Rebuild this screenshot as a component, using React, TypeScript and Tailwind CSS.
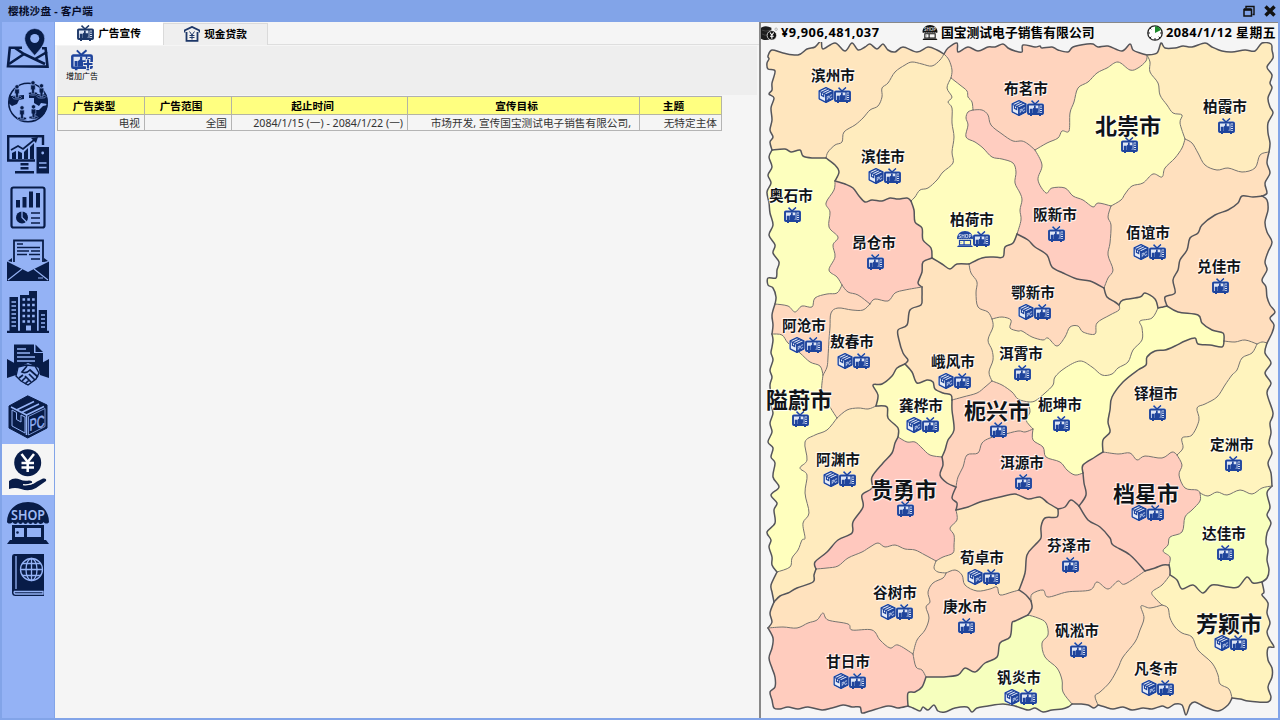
import React from "react";

type Pt = [number, number];

/* Borders between regions. A leading "!" marks a province or coast line. */
const EDGES: Record<string, string> = {
  AB: "!772,150 770,142 773,137 770,130 772,120 771,108 774,98 769,94 772,90 772,83 775,71 768,69 767,63 769,59 768,56 772,50 783,53 798,55 807,49 815,47 821,41 823,49 835,43 845,51 852,43 858,50 865,47 870,44 877,49 883,44 888,50 895,52 903,47 917,52 928,47 937,50 944,54",
  BC: "!944,54 948,48 957,43 958,52 968,47 978,51 988,47 995,47 1003,44 1008,48 1015,51 1022,52 1023,45 1035,47 1040,46 1042,48 1052,47 1058,50 1068,52 1073,47 1087,44 1093,44 1098,47 1108,46 1122,51 1130,44 1133,50 1140,53 1147,55",
  CD: "!1147,55 1157,53 1161,43 1165,48 1175,48 1183,46 1192,47 1205,43 1212,47 1222,51 1232,52 1245,50 1255,51 1262,43 1271,44 1272,50 1273,58 1267,67 1272,75 1270,83 1272,88 1268,98 1270,107 1273,113 1268,123 1268,133 1270,143 1269,152",
  DE: "!1269,152 1267,163 1270,173 1265,183 1267,193 1262,196",
  EF: "!1262,196 1267,200 1268,210 1265,222 1267,232 1272,242 1268,252 1265,262 1267,270 1262,280 1266,287 1267,297 1270,305 1275,312 1270,318 1274,325 1272,333 1267,343",
  FG: "!1267,343 1265,353 1271,363 1265,373 1271,383 1267,393 1273,413 1270,423 1271,433 1269,443 1272,453 1268,463 1271,473 1272,486",
  GH: "!1272,486 1267,493 1270,507 1267,515 1271,523 1267,533 1266,543 1268,550 1267,560 1269,570 1267,578 1262,582",
  HI: "!1262,582 1264,592 1262,595 1268,603 1267,613 1270,623 1267,632 1270,640 1274,647 1268,648 1268,660 1272,668 1272,677 1268,687 1271,697 1268,702 1258,702 1248,701 1240,699 1232,698",
  IJ: "!1232,698 1228,705 1218,711 1205,707 1195,702 1190,705 1186,715 1182,705 1175,704 1168,708 1162,706 1152,709 1143,708 1132,710 1123,707 1113,709 1105,707 1098,705",
  JK: "!1098,705 1094,708 1088,705 1080,704 1072,704",
  KL: "!1072,704 1068,707 1062,709 1052,710 1043,712 1035,708 1028,710 1015,706 1003,704 988,706 977,708 972,712 967,707 955,708 945,712 938,711 934,705 928,710 923,707 920,711 913,708 908,706",
  LM: "!908,706 898,708 888,706 870,711 862,713 860,707 852,707 843,705 832,708 822,710 808,707 798,709 788,707 780,709 774,708 772,700 770,692 775,687 775,677 772,668 769,658 772,648 773,638 768,628",
  MN: "!768,628 772,622 770,613 774,602",
  NO: "!774,602 772,592 771,585 777,572",
  OP: "!777,572 772,565 772,557 769,547 771,540 767,532 775,523 774,510 777,503 771,495 779,487 773,477 775,463 771,457 773,448 768,442 772,432 770,423 773,413 770,403 771,397 770,385 772,377 770,370 773,360 771,353 772,347 773,340 772,334",
  PQ: "!772,334 773,325 772,315 775,304",
  QA: "!775,304 776,297 773,288 768,285 768,278 776,278 777,270 779,262 773,253 775,245 769,235 773,225 770,213 769,203 767,192 771,183 768,175 772,167 769,157 772,150",
  e1: "!772,150 785,149 791,152 800,150 803,156 812,158 826,158",
  e2: "826,158 828,152 835,145 842,142 844,132 855,125 863,118 870,110 878,106 882,97 882,88 888,83 895,72 905,65 912,62 922,64 932,66 940,60 944,54",
  e3: "!826,158 835,165 839,172 835,181",
  e4: "!835,181 845,184 853,188 859,196 865,202 872,200 882,201 890,198 898,199 907,198 911,201",
  e5: "911,201 915,197 920,190 928,188 937,180 943,172 953,163 952,152 954,137 952,123 952,108 948,102 952,97 947,88 951,78",
  e6: "944,54 949,60 952,70 951,78",
  e7: "951,78 960,85 967,91 968,97 972,102 973,110",
  e8: "973,110 968,112 966,118 968,125 966,137 975,142 983,148 992,157 1002,159 1013,163 1016,172 1015,183 1020,193 1022,200 1020,210 1021,220 1017,234",
  e9: "973,110 982,110 988,115 991,125 1002,134 1013,141 1022,141 1028,144 1035,150",
  e10: "1035,150 1047,143 1058,138 1062,131 1069,131 1070,113 1074,102 1078,88 1088,82 1097,73 1107,68 1118,62 1130,70 1138,68 1146,61 1147,55",
  e11: "1147,55 1150,62 1150,72 1158,83 1160,95 1167,105 1173,113 1182,115 1180,123 1185,139",
  e12: "1185,139 1192,143 1198,153 1205,165 1217,170 1228,168 1242,172 1255,168 1260,155 1269,152",
  e13: "1035,150 1042,165 1038,180 1046,193 1052,188 1065,188 1073,196 1083,200 1093,207 1098,203 1111,206",
  e14: "1111,206 1121,200 1125,194 1132,186 1143,183 1153,174 1162,177 1165,168 1175,158 1182,148 1185,139",
  e15: "1111,206 1108,217 1111,225 1110,243 1108,255 1113,270 1108,278 1104,288",
  e16: "!1017,234 1028,240 1035,247 1047,255 1052,267 1063,273 1077,279 1090,281 1104,288",
  e17: "!1104,288 1107,297 1115,302 1119,305",
  e18: "!1119,305 1123,300 1140,297 1145,293 1155,299 1158,308",
  e19: "!1158,308 1163,307 1167,306",
  e20: "!1167,306 1165,297 1175,293 1173,280 1178,270 1180,260 1187,250 1190,238 1198,233 1202,225 1215,215 1228,210 1238,203 1242,196 1253,197 1262,196",
  e21: "1158,308 1152,318 1140,321 1142,328 1142,340 1133,350 1128,362 1118,368 1112,374 1102,375 1092,367 1080,361 1065,368 1055,377 1053,385 1045,393 1035,401 1028,402",
  e22: "!1167,306 1178,312 1198,315 1202,323 1212,330 1223,333 1224,341",
  e23: "1224,341 1235,342 1245,340 1257,344",
  e24: "1257,344 1262,342 1267,343",
  e25: "!1224,341 1222,347 1210,345 1198,344 1195,338 1185,341 1175,346 1165,350 1155,351 1147,357 1146,365 1138,370 1123,382 1112,397 1110,410 1108,422 1110,432 1103,440 1103,452",
  e26: "1257,344 1252,353 1242,358 1237,370 1232,375 1225,385 1217,397 1205,404 1197,408 1199,420 1192,435 1182,438 1183,448 1177,455",
  e27: "1103,452 1118,454 1130,453 1137,460 1145,456 1162,458 1172,452 1177,455",
  e28: "1177,455 1182,465 1179,475 1185,488 1197,490 1200,493",
  e29: "1200,493 1208,496 1217,492 1227,495 1240,490 1252,494 1262,488 1272,486",
  e30: "1200,493 1200,501 1192,510 1185,517 1182,532 1170,537 1168,545 1163,551 1170,557 1169,565",
  e31: "!1145,571 1155,568 1163,565 1169,565",
  e32: "!1169,565 1170,570 1170,575",
  e33: "!1170,575 1177,580 1182,589 1193,585 1203,593 1212,585 1228,587 1238,587 1247,577 1253,583 1262,582",
  e34: "1170,575 1162,585 1152,592 1155,598 1162,605",
  e35: "1162,605 1168,608 1170,618 1175,627 1182,633 1192,637 1198,650 1212,663 1218,675 1220,684 1229,689 1232,698",
  e36: "1162,605 1150,608 1141,606 1144,618 1140,630 1135,642 1123,657 1118,668 1110,682 1100,692 1095,696 1098,705",
  e37: "!1019,590 1026,595 1031,601",
  e38: "1031,601 1032,594 1043,590 1048,597 1067,592 1090,590 1097,582 1108,589 1118,581 1125,584 1145,571",
  e39: "!1031,601 1032,608 1028,615",
  e40: "1028,615 1038,618 1046,623 1048,635 1042,643 1045,657 1057,668 1062,680 1063,692 1072,704",
  e41: "!1028,615 1015,621 1012,623 1010,637 1000,643 997,657 985,663 975,672 965,668 958,675 942,677 926,677",
  e42: "!926,677 922,687 915,692 908,693 908,706",
  e43: "913,654 916,667 922,670 926,677",
  e44: "768,628 783,627 797,628 808,623 817,620 823,613 828,620 848,624 852,630 872,630 880,640 890,648 898,645 913,654",
  e45: "946,573 943,578 933,583 928,592 930,602 926,607 929,618 925,630 917,640 913,654",
  e46: "936,561 934,568 938,572 946,573",
  e47: "946,573 955,570 962,575 965,585 977,591 990,589 997,587 1000,595 1012,592 1019,590",
  e48: "816,569 827,568 838,566 848,558 862,552 870,547 878,543 885,547 895,545 905,549 915,550 925,555 936,561",
  e49: "!774,602 780,596 788,593 797,588 813,582 814,575 816,569",
  e50: "!816,569 815,562 827,552 838,540 852,533 853,522 863,507 862,495 872,488 872,477 883,463 892,453 895,443 898,437",
  e51: "777,572 790,567 792,558 798,550 802,540 805,538 803,523 809,513 805,493 807,475 800,468 807,460 805,442 815,435 827,430 837,418",
  e52: "837,418 847,410 858,408 868,409 876,406",
  e53: "!876,406 887,407 888,418 898,428 898,437",
  e54: "!876,406 878,395 873,385 882,384 892,376 897,368 905,364",
  e55: "!905,364 908,360 903,353 899,340 898,330 907,325 910,310 921,305 922,297 922,287",
  e56: "!922,287 918,283 922,272 923,262 932,258",
  e57: "!911,201 914,210 915,222 922,228 923,240 931,248 932,258",
  e58: "!932,258 942,264 950,269 957,264 969,264",
  e59: "!969,264 982,258 993,257 1003,257 1005,247 1013,243 1017,234",
  e60: "969,264 971,273 977,282 976,293 978,307 988,312 992,319",
  e61: "992,319 1002,317 1011,320 1010,328 1018,331 1022,331 1032,337 1043,340 1048,338 1057,346 1065,337 1070,327 1078,326 1083,332 1095,334 1097,323 1110,315 1119,310 1119,305",
  e62: "992,319 993,327 988,340 992,350 993,360 989,372 992,381",
  e63: "992,381 1002,385 1012,392 1018,399 1028,402",
  e64: "952,400 963,397 977,393 985,387 992,381",
  e65: "!905,364 912,372 917,383 927,380 933,382 935,389 943,393 951,395 952,400",
  e66: "!952,400 952,410 954,430 948,440 945,450 942,457",
  e67: "898,437 907,442 915,442 922,448 930,455 942,457",
  e68: "!942,457 943,465 940,475 947,483 956,487",
  e69: "!956,487 952,498 957,503 956,510",
  e70: "956,510 957,520 950,528 954,535 954,545 953,553 943,557 936,561",
  e71: "956,487 958,477 963,467 967,455 978,453 982,443 990,438 1002,435 1018,431 1025,432 1033,429",
  e72: "1028,402 1030,412 1026,420 1033,429",
  e73: "1033,429 1033,440 1043,447 1046,457 1060,462 1067,470 1075,475 1083,473",
  e74: "!1083,473 1083,465 1095,457 1103,452",
  e75: "!1083,473 1084,483 1086,495 1079,506",
  e76: "!1058,509 1065,507 1071,500 1079,506",
  e77: "!956,510 968,507 980,502 1000,497 1015,494 1028,499 1040,497 1048,503 1058,509",
  e78: "!1058,509 1057,517 1045,518 1041,527 1041,538 1035,545 1027,555 1025,573 1019,590",
  e79: "!1079,506 1088,520 1100,527 1110,538 1113,545 1130,555 1145,571",
  e80: "835,181 834,190 826,203 830,212 829,227 838,237 833,245 835,257 829,270 837,277 842,285",
  e81: "775,304 788,306 795,312 802,306 812,307 815,298 827,294 837,293 842,285",
  e82: "842,285 848,292 858,295 870,304",
  e83: "870,304 875,299 888,301 895,293 905,290 922,287",
  e84: "870,304 863,310 852,310 838,308 831,313 830,327 829,340 828,357 827,367 823,375",
  e85: "772,334 782,335 788,343 800,353 810,362 820,366 823,375",
  e86: "823,375 822,393 830,407 837,418",
};

interface City {
  name: string;
  fill: string;
  edges: string;
  x: number;
  y: number;
  icons: string;
  big?: boolean;
}

const c = (name: string, fill: string, edges: string, x: number, y: number, icons: string, big = false): City => ({ name, fill, edges, x, y, icons, big });

const CITIES: City[] = [
  c("滨州市", "#ffe6be", "AB e2 e1", 833, 76, "pt"),
  c("滨佳市", "#ffecbe", "e2 e6 e5 e4 e3", 883, 157, "pt"),
  c("布茗市", "#ffd4be", "BC e10 e9 e7 e6", 1026, 89, "pt"),
  c("柏霞市", "#ffecbe", "CD e12 e11", 1225, 107, "t"),
  c("北崇市", "#fffdbe", "e10 e11 e14 e13", 1128, 126, "t", true),
  c("奥石市", "#fdffbe", "QA e1 e3 e80 e81", 791, 196, "t"),
  c("柏荷市", "#fffdbe", "e5 e7 e8 e59 e58 e57", 972, 220, "st"),
  c("阪新市", "#ffcdc0", "e9 e13 e15 e16 e8", 1055, 215, "t"),
  c("佰谊市", "#ffe0be", "e14 e12 DE e20 e19 e18 e17 e15", 1148, 233, "pt"),
  c("昂仓市", "#ffccbe", "e4 e57 e56 e83 e82 e80", 874, 243, "t"),
  c("兑佳市", "#ffdebe", "e20 EF e24 e23 e22", 1219, 267, "t"),
  c("鄂新市", "#ffdabe", "e59 e16 e17 e61 e60", 1033, 293, "pt"),
  c("阿沧市", "#ffd8be", "PQ e81 e82 e84 e85", 804, 326, "pt"),
  c("敖春市", "#ffe0be", "e84 e83 e55 e54 e52 e86", 852, 342, "pt"),
  c("峨风市", "#ffe3be", "e56 e58 e60 e62 e64 e65 e55", 953, 362, "pt"),
  c("洱霄市", "#fff4be", "e61 e18 e21 e63 e62", 1021, 354, "t"),
  c("隘蔚市", "#ffffbe", "OP e85 e86 e51", 799, 400, "t", true),
  c("龚桦市", "#fffdbe", "e54 e65 e66 e67 e53", 921, 406, "pt"),
  c("枙兴市", "#ffd4be", "e64 e63 e72 e71 e68 e66", 997, 411, "t", true),
  c("枙坤市", "#ffffbe", "e21 e19 e22 e25 e74 e73 e72", 1060, 405, "t"),
  c("铎桓市", "#ffe6be", "e25 e23 e26 e27", 1156, 394, "t"),
  c("定洲市", "#fff4be", "e24 FG e29 e28 e26", 1232, 445, "t"),
  c("阿渊市", "#ffebbe", "e51 e52 e53 e50 e49 NO", 838, 460, "pt"),
  c("洱源市", "#ffcabe", "e71 e73 e75 e76 e77 e69", 1022, 463, "t"),
  c("贵勇市", "#ffc8be", "e50 e67 e68 e69 e70 e48", 904, 490, "t", true),
  c("档星市", "#ffcdbe", "e74 e27 e28 e30 e31 e79 e75", 1146, 494, "pt", true),
  c("达佳市", "#f8ffbe", "e29 GH e33 e32 e30", 1224, 534, "t"),
  c("荀卓市", "#ffe8be", "e77 e78 e47 e46 e70", 982, 558, "pt"),
  c("芬泽市", "#ffd0be", "e76 e79 e38 e37 e78", 1069, 546, "t"),
  c("谷树市", "#ffe2be", "e49 e48 e46 e45 e44 MN", 895, 593, "pt"),
  c("庚水市", "#ffd6be", "e47 e37 e39 e41 e43 e45", 965, 607, "t"),
  c("芳颖市", "#fff3be", "e33 HI e35 e34", 1229, 624, "pt", true),
  c("矾淞市", "#ffdcbe", "e38 e31 e32 e34 e36 JK e40 e39", 1077, 631, "t"),
  c("甘日市", "#ffccbe", "e44 e43 e42 LM", 848, 662, "pt"),
  c("凡冬市", "#ffe4be", "e35 e36 IJ", 1156, 669, "pt"),
  c("钒炎市", "#f6ffbe", "e41 e40 KL e42", 1019, 678, "pt"),
];

const parse = (s: string): Pt[] =>
  s.replace("!", "").split(" ").map((p) => p.split(",").map(Number) as Pt);

/* Catmull-Rom spline through the points, as bezier segments. */
const curve = (p: Pt[]): string =>
  p.slice(1).map((b, i) => {
    const a = p[i];
    const z = p[i - 1] ?? a;
    const d = p[i + 2] ?? b;
    const f = (n: number) => n.toFixed(1);
    return `C${f(a[0] + (b[0] - z[0]) / 6)} ${f(a[1] + (b[1] - z[1]) / 6)} ${f(b[0] - (d[0] - a[0]) / 6)} ${f(b[1] - (d[1] - a[1]) / 6)} ${b[0]} ${b[1]}`;
  }).join("");

const dist = (a: Pt, b: Pt) => Math.hypot(a[0] - b[0], a[1] - b[1]);

const ring = (keys: string): string => {
  const rest = keys.split(" ").map((k) => parse(EDGES[k]));
  const first = rest.shift()!;
  let d = `M${first[0].join(" ")}` + curve(first);
  let end = first[first.length - 1];
  while (rest.length) {
    let best = 0, flip = false, min = Infinity;
    rest.forEach((e, i) => {
      const a = dist(end, e[0]);
      const b = dist(end, e[e.length - 1]);
      if (a < min) { min = a; best = i; flip = false; }
      if (b < min) { min = b; best = i; flip = true; }
    });
    let e = rest.splice(best, 1)[0];
    if (flip) e = [...e].reverse();
    d += `L${e[0].join(" ")}` + curve(e);
    end = e[e.length - 1];
  }
  return d + "Z";
};

function Tv({ className = "h-4 w-[17px]", color = "#1f449c" }: { className?: string; color?: string }) {
  return (
    <svg viewBox="0 0 17 16" className={className} fill="none" stroke={color}>
      <path d="M4.500 .6L8 4L12 .4" strokeWidth="1.500" />
      <rect x="1" y="4.500" width="15" height="9.500" rx=".8" strokeWidth="1.900" fill="#dfe6f5" />
      <path d="M12 5v9" strokeWidth="1.200" />
      <path d="M3 15.200h2M12 15.200h2" strokeWidth="1.400" />
      <path d="M2.800 8.800h2.200v4.200H2.800zM5.300 9L7 7.400V5.500h1.700v2.700h2.500v2l-.6 3H5.300z" fill={color} stroke="none" />
      <path d="M13 7.200h2M13 9.400h2M13 11.600h2" strokeWidth="1.300" />
    </svg>
  );
}

function Box() {
  return (
    <svg viewBox="0 0 42 42" className="h-4 w-4">
      <path d="M21 1.500L39 10V31L21 40.500L3 31V10Z" fill="#e6ecf8" stroke="#1f449c" strokeWidth="3.600" strokeLinejoin="round" />
      <path d="M20 19L40 9V32L20 42Z" fill="#1f449c" />
      <path d="M3 11L20 19V40M9 14L27 5M15 17L34 8M9 14V22L15 25V17" stroke="#1f449c" strokeWidth="3" fill="none" />
      <text transform="matrix(1 -.42 0 1 22 35.500)" fontSize="15" fontWeight="700" fontFamily="Liberation Sans, sans-serif" textLength="16" lengthAdjust="spacingAndGlyphs" fill="#c9d6f2">PC</text>
    </svg>
  );
}

function Shop({ className = "h-4 w-4", color = "#1f449c", label = "#9ebaf5" }: { className?: string; color?: string; label?: string }) {
  return (
    <svg viewBox="0 0 42 42" className={className} fill={color}>
      <path d="M0 20C0 8 9 0 21 0S42 8 42 20C41 22 38 22 36.700 20C35 22.500 32 22.500 31 20C30 22.500 27 22.500 26 20C25 22.500 22 22.500 21 20C20 22.500 17 22.500 16 20C15 22.500 12 22.500 11 20C10 22.500 7 22.500 5.500 20C4 22 1 22 0 20Z" />
      <path fillRule="evenodd" d="M5 23H37V38H5ZM8 26V35H17V26ZM20 26V35H34V26Z" />
      <circle cx="10.500" cy="30.500" r="1.300" />
      <path d="M3 38H39L42 42H0Z" />
      <text x="21" y="17.500" fontSize="13.500" fontWeight="600" textAnchor="middle" fontFamily="Noto Sans, sans-serif" textLength="34" lengthAdjust="spacingAndGlyphs" fill={label}>SHOP</text>
    </svg>
  );
}

const N = "#081c48";
const B = "#94b2f5";

const person = (x: number, y: number) => (
  <g key={`${x}-${y}`} fill={N} stroke={B} strokeWidth=".6">
    <ellipse cx={x} cy={y + 11.500} rx="4.500" ry="1.700" />
    <path d={`M${x - 2.300} ${y + 3}h4.600v4.700h-.9v4.100h-2.800v-4.100h-.9z`} />
    <circle cx={x} cy={y + .8} r="2.100" />
  </g>
);

const SIDE: { key: string; art: React.ReactNode }[] = [
  { key: "map", art: (
    <>
      <path d="M15 19.700H2.800L1 38.200Q20 38.200 40.500 38.600L38.600 20.300H35" fill="none" stroke={N} strokeWidth="2.600" />
      <path d="M8 20L17 26L38 36M17 26L2 36M28 31L40 24" fill="none" stroke={N} strokeWidth="2.600" />
      <path d="M27.700 0.500A10 10 0 0 0 17.700 10.500C17.700 17 23 22 27.700 27.500C32.400 22 37.700 17 37.700 10.500A10 10 0 0 0 27.700 .5Z" fill={N} stroke={B} strokeWidth=".6" />
      <circle cx="27.700" cy="10.500" r="4.500" fill={B} />
    </>) },
  { key: "globe", art: (
    <>
      <circle cx="21" cy="21.500" r="19.300" fill="none" stroke={N} strokeWidth="1.500" />
      <path d="M3 15L17 14V18L12 19L10 23L5 25L1.500 22ZM22 13H38L40.500 18V23L34 22L32 25L27 22V17H22ZM27 29H32L36 25L40.500 24Q39 34 31 38L26 35V32Z" fill={N} />
      {[[10, 5], [26, 1], [34.500, 4], [15, 26], [26.500, 25]].map(([x, y]) => person(x, y))}
    </>) },
  { key: "desktop", art: (
    <>
      <path d="M28 27.500H1.200V3.200H36V12" fill="none" stroke={N} strokeWidth="2.400" />
      <path d="M5 26V20L9 18V26ZM11 26V18L15 20V26ZM17 26V19L21 15V26ZM23 26V14L27 10V26Z" fill={N} />
      <path d="M4 17L11 13L16 16L27 7" fill="none" stroke={N} strokeWidth="1.700" />
      <path d="M24 5L31 4L29 10Z M13.500 30H21.500V32.500H13.500ZM13.500 34H21.500V36.500H13.500ZM8 38H27V40.500H8Z" fill={N} />
      <path d="M29.500 14H42V40.500H29.500Z" fill={N} />
      <circle cx="35.700" cy="20" r="1.400" fill={B} />
      <path d="M32 30H39.500M32 34.500H39.500" stroke={B} strokeWidth="1.300" />
    </>) },
  { key: "report", art: (
    <>
      <rect x="4.500" y="1.500" width="33" height="40" rx="2" fill="none" stroke={N} strokeWidth="2.200" />
      <path d="M9 14H13V21.500H9ZM15.500 11H19.500V21.500H15.500ZM22 5.500H26V21.500H22ZM29 7H33V21.500H29Z" fill={N} />
      <circle cx="15" cy="31.500" r="6" fill={N} />
      <path d="M15 25V31.500L19.500 36" stroke={B} strokeWidth="1.200" fill="none" />
      <path d="M24 27H33M24 32H33M24 37H33" stroke={N} strokeWidth="1.600" />
    </>) },
  { key: "mail", art: (
    <>
      <path d="M7 23V1.500H36V23" fill="none" stroke={N} strokeWidth="1.800" />
      <path d="M10 5H16M10 8.500H33M10 12H22M24 12H33M10 15.500H20M22 15.500H33M24 20H33" stroke={N} strokeWidth="1.400" />
      <path d="M0 22.500L21 33L42 22.500V42H0Z M1 22L5 19V23ZM41 22L37 19V23Z" fill={N} />
      <path d="M1 41L15 30M41 41L27 30M31 39H36" stroke={B} strokeWidth="1.100" />
    </>) },
  { key: "city", art: (
    <>
      <path d="M2.500 6H11V41H2.500ZM13 4H22V0H30V41H13ZM31.700 19H40V41H31.700ZM0 39.800H42V42H0Z" fill={N} />
      <path d="M4.500 11H9M4.500 15H9M4.500 19H9M4.500 23H9M4.500 27H9M4.500 31H9M4.500 35H9M34 24H38M34 28H38M34 32H38M34 36H38" stroke={B} strokeWidth="1.300" />
      <path d="M15.500 8.500H28M15.500 14H28M15.500 19.500H28M15.500 25H28M15.500 30.500H28" stroke={B} strokeWidth="2.500" strokeDasharray="2.600 2.200" />
      <path d="M18.500 34H24.500V40H18.500Z" fill={B} stroke={N} />
    </>) },
  { key: "deal", art: (
    <>
      <path d="M7 .5H27V9H36V26L21 19L7 26Z M28.500 .5L36 8H28.500Z" fill={N} />
      <path d="M10 5H19M10 9H23M10 13H28M10 17H28" stroke={B} strokeWidth="1.300" />
      <path d="M0 15L11 21L9 31L0 34ZM42 15L31 21L33 31L42 34Z" fill={N} />
      <path d="M11 23L19 21L28 22L32 29L29 35L21 41L14 37L9 32Z" fill={B} stroke={N} strokeWidth="1.400" />
      <path d="M20 22L15 28Q19 30 23 26L31 33M22 30L28 36M18 32L24 38M12 34L16 31M15 37L19 33M18 40L22 36" stroke={N} strokeWidth="1.700" fill="none" />
    </>) },
  { key: "box", art: (
    <>
      <path d="M20.700 -.2L40 9V32L20.700 42L2 32V10Z" fill={N} stroke={N} strokeLinejoin="round" />
      <path d="M4 11L19.500 19V39M19.500 19L37 10.500M9.500 14L27 5.500M14.500 16.500L32 8" stroke={B} strokeWidth="1.600" fill="none" />
      <path d="M5 14V30L18 37V21L14 19V26L9.500 23.500V16.500Z" fill={N} stroke={B} strokeWidth="1" />
      <path d="M21.500 20.500L38 12.500V30.500L21.500 39Z" fill={N} stroke={B} strokeWidth=".8" />
      <text transform="matrix(1 -.3 0 1 22.500 35)" fontSize="16.500" fontFamily="Liberation Sans, sans-serif" textLength="15" lengthAdjust="spacingAndGlyphs" fill={B} stroke={B} strokeWidth=".5">PC</text>
    </>) },
  { key: "money", art: (
    <>
      <circle cx="20.700" cy="13.700" r="13.500" fill={N} />
      <path d="M14.500 5L20.700 13L27 5M20.700 13V23M14.500 14H27M14.500 18.500H27" stroke="#fff" strokeWidth="2.500" fill="none" />
      <path d="M2 32Q7 28 13 30.500Q17 32.500 22 31.500Q26 31.500 25 34L18 36Q26 36 30 32.500L36 29.500Q40 29 39 32L29 39Q22 43 14 40Q8 38 2 40Z" fill={N} />
      <path d="M16 35.700Q23 36.500 27 33.500" stroke="#f5f5f5" fill="none" strokeWidth="1.200" />
    </>) },
  { key: "shop", art: <Shop className="h-[42px] w-[42px]" color={N} /> },
  { key: "book", art: (
    <>
      <path d="M7.500 0H37V42H8.500Q5 42 5 38.500V3Q5 0 7.500 0Z" fill={N} />
      <path d="M9 2V35M7 37.500H36V40H8.500Q7 40 7 37.500" stroke={B} strokeWidth="1.300" fill="none" />
      <g fill="none" stroke={B} strokeWidth="1.300">
        <circle cx="24.500" cy="15.500" r="11" />
        <ellipse cx="24.500" cy="15.500" rx="5.500" ry="11" />
        <path d="M24.500 4.500V26.500M13.500 15.500H35.500M15.500 9.500H33.500M15.500 21.500H33.500" />
      </g>
    </>) },
];

const ICON_OF: Record<string, React.ReactNode> = {
  p: <Box />,
  t: <Tv />,
  s: <Shop className="h-4 w-4" label="#e6ecf8" />,
};

function RegionMap() {
  return (
    <div className="relative flex-1">
      <svg viewBox="761 42 517 676" className="absolute top-0 left-0 h-[676px] w-[517px]" fill="none">
        {CITIES.map((r) => <path key={r.name} d={ring(r.edges)} fill={r.fill} />)}
        {Object.entries(EDGES).map(([k, s]) => {
          const p = parse(s);
          return <path key={k} d={`M${p[0].join(" ")}` + curve(p)} stroke={s[0] === "!" ? "#55555a" : "#77736e"} strokeWidth={s[0] === "!" ? 1.5 : 1} strokeLinecap="round" />;
        })}
      </svg>
      {CITIES.map((r) => (
        <div key={r.name} className="absolute flex w-24 -translate-x-1/2 flex-col items-center" style={{ left: r.x - 761, top: r.y - 42 - 12 }}>
          <div className={(r.big ? "text-[22px]" : "text-[14.600px]") + " h-[23px] font-bold leading-[23px] whitespace-nowrap text-[#111418] [text-shadow:0_0_2px_#fff,0_0_2px_#fff,1px_1px_0_#ffffffaa,-1px_-1px_0_#ffffffaa]"}>{r.name}</div>
          <div className="flex h-4 translate-x-px [filter:drop-shadow(0_0_.5px_#fff)_drop-shadow(0_0_.5px_#fff)]">
            {r.icons.split("").map((i) => <React.Fragment key={i}>{ICON_OF[i]}</React.Fragment>)}
          </div>
        </div>
      ))}
    </div>
  );
}

const COLS = [
  { head: "广告类型", cell: "电视", w: "w-[87px]", pad: "pr-1" },
  { head: "广告范围", cell: "全国", w: "w-[87px]", pad: "pr-1" },
  { head: "起止时间", cell: "2084/1/15 (一) - 2084/1/22 (一)", w: "w-[176px]", pad: "pr-1" },
  { head: "宣传目标", cell: "市场开发, 宣传国宝测试电子销售有限公司,", w: "w-[232px]", pad: "pr-2" },
  { head: "主题", cell: "无特定主体", w: "w-[82px]", pad: "pr-1" },
];

export default function App() {
  return (
    <div className="flex h-[720px] w-[1280px] flex-col overflow-hidden bg-[#82a4e8] font-['Noto_Sans','Noto_Sans_CJK_SC',sans-serif] text-[10.670px] text-black">
      <header className="flex h-[22px] shrink-0 items-center justify-between pr-1 pl-2">
        <h1 className="leading-none font-bold tracking-[.15px] text-[#060b26]">樱桃沙盘 - 客户端</h1>
        <div className="flex items-center gap-[9px]">
          <svg viewBox="0 0 12 12" className="h-3 w-3" fill="none" stroke="#111">
            <path d="M3 3.500V1.500H11V9.500H9.500" strokeWidth="1.400" />
            <path d="M1 4.500H8.500V11H1Z" strokeWidth="1.500" />
            <path d="M1 4.500H8.500" strokeWidth="2.500" />
          </svg>
          <svg viewBox="0 0 12 12" className="h-3 w-3" stroke="#111" strokeWidth="3.400"><path d="M1.500 1.500L10.500 10.500M10.500 1.500L1.500 10.500" /></svg>
        </div>
      </header>
      <div className="flex h-[696px] min-h-0">
        <nav className="ml-0.5 flex w-[52px] shrink-0 flex-col bg-[#94b2f5] pt-px">
          {SIDE.map((s) => (
            <div key={s.key} className={"flex h-[52.600px] shrink-0 items-center justify-center " + (s.key === "money" ? "bg-[#f5f5f5] bg-clip-content pb-px" : "")}>
              <svg viewBox="0 0 42 42" className="mr-px h-[42px] w-[42px] overflow-visible">{s.art}</svg>
            </div>
          ))}
        </nav>
        <main className="ml-px flex w-[704px] shrink-0 flex-col bg-[#f5f5f5]">
          <div className="flex h-[23px] shrink-0 border-b border-[#dedede] font-bold">
            <div className="flex h-[23px] w-[108px] items-center justify-center gap-1 bg-white pb-0.5"><Tv color="#1d3768" />广告宣传</div>
            <div className="mt-px flex h-[22px] w-[105px] items-center justify-center gap-1 border border-b-0 border-[#dadada] bg-[#efefef] pb-px">
              <svg viewBox="0 0 16 16" className="h-4 w-4" fill="none" stroke="#1d3768">
                <path d="M2.500 6V14.800H13.500V6" strokeWidth="1.800" /><path d="M.5 6.500V4.500L8 .9L15.500 4.500V6.500" strokeWidth="1.800" />
                <path d="M5.500 5.500L8 9L10.500 5.500M8 9V13.500M5.500 9.500H10.500M5.500 11.500H10.500" strokeWidth="1" />
              </svg>
              现金贷款
            </div>
          </div>
          <div className="mx-0.5 mt-px flex h-[49px] shrink-0 bg-[#eee] pt-[3px] pl-[7px]">
            <div className="flex h-[34px] w-9 flex-col items-center text-[8px]">
              <div className="relative">
                <Tv className="h-[22px] w-[22px]" />
                <svg viewBox="0 0 10 10" className="absolute right-0 bottom-0.5 h-2.5 w-2.5"><path d="M5 0V10M0 5H10" stroke="#eee" strokeWidth="4" /><path d="M5 .5V9.500M.5 5H9.500" stroke="#1f449c" strokeWidth="2.200" /></svg>
              </div>
              <span className="leading-[10px] whitespace-nowrap">增加广告</span>
            </div>
          </div>
          <div className="mt-px ml-0.5 flex w-[665px] border-t border-l border-[#b0b0b0]">
            {COLS.map((k) => (
              <div key={k.head} className={k.w + " shrink-0"}>
                <div className="flex h-[18px] items-center justify-center border-r border-b border-[#b4b4a4] bg-[#ffff80] pt-px pr-3.5 leading-none font-bold whitespace-nowrap">{k.head}</div>
                <div className={"flex h-4 items-center justify-end border-r border-b border-[#b4b4b4] pt-px leading-none whitespace-nowrap text-[#333] " + k.pad}>{k.cell}</div>
              </div>
            ))}
          </div>
        </main>
        <section className="flex w-[519px] shrink-0 flex-col border-t border-l-2 border-[#888] bg-[#f5f5f5]">
          <div className="flex h-[19px] shrink-0 items-center justify-between pr-0.5 text-[12.800px] leading-none font-bold">
            <div className="flex items-center">
              <svg viewBox="0 0 18 16" className="h-4 w-[17px]">
                <path d="M0 2.500Q5 -1 11 2.500V14Q5 17 0 14Z" fill="#1c1c1c" />
                <path d="M1 5Q5 7 10 5M1 9Q4 11 7 10" stroke="#444" fill="none" />
                <circle cx="11.500" cy="10.500" r="5" fill="#111" stroke="#f5f5f5" strokeWidth=".8" />
                <path d="M9.500 7.500L11.500 10.200L13.500 7.500M11.500 10V14M9.500 11.500H13.500" stroke="#fff" fill="none" strokeWidth="1.200" />
                <circle cx="16" cy="4" r="1.300" stroke="#888" fill="none" strokeWidth=".6" />
              </svg>
              <span className="ml-[3px] tracking-[.5px]">¥9,906,481,037</span>
            </div>
            <div className="flex items-center gap-[3px] pr-2.5"><Shop color="#111" label="#ddd" className="h-[15px] w-4" />国宝测试电子销售有限公司</div>
            <div className="flex items-center gap-[3px]">
              <svg viewBox="0 0 16 16" className="h-4 w-4">
                <circle cx="8" cy="8" r="7.200" fill="#fff" stroke="#222" strokeWidth="1.300" />
                <path d="M8 8V1.200A6.800 6.800 0 0 1 14 5Z" fill="#1d8a2c" />
                <path d="M8 13V15M1 8H3M13 8H15M3 3L4.300 4.300M3 13L4.300 11.700M13 13L11.700 11.700" stroke="#222" />
              </svg>
              <span className="tracking-[.5px]">2084/1/12 星期五</span>
            </div>
          </div>
          <RegionMap />
        </section>
      </div>
    </div>
  );
}
